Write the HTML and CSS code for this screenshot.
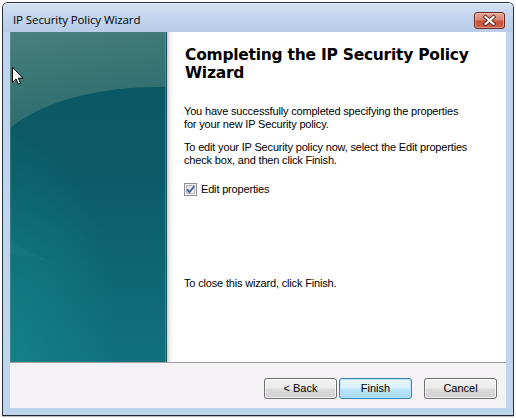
FILE: index.html
```html
<!DOCTYPE html>
<html>
<head>
<meta charset="utf-8">
<title>IP Security Policy Wizard</title>
<link rel="stylesheet" href="styles.css">
</head>
<body>
<div class="window">
  <div class="titlebar">
    <span class="title">IP Security Policy Wizard</span>
    <div class="close">
      <svg width="31" height="17" viewBox="0 0 31 17">
        <path d="M11.5,5 L19.5,12 M19.5,5 L11.5,12" stroke="#5a2a24" stroke-width="4" stroke-linecap="square"/>
        <path d="M11.5,5 L19.5,12 M19.5,5 L11.5,12" stroke="#ffffff" stroke-width="2.2" stroke-linecap="square"/>
      </svg>
    </div>
  </div>
  <div class="client">
    <div class="main">
      <div class="banner">
        <svg width="157" height="330" viewBox="0 0 157 330">
          <defs>
            <linearGradient id="bgGrad" x1="0" y1="0" x2="0" y2="1">
              <stop offset="0" stop-color="#0a5660"/>
              <stop offset="0.45" stop-color="#0b5c68"/>
              <stop offset="1" stop-color="#12707e"/>
            </linearGradient>
            <radialGradient id="glow" cx="0" cy="1" r="0.7" gradientUnits="objectBoundingBox">
              <stop offset="0" stop-color="#13868b" stop-opacity="0.75"/>
              <stop offset="1" stop-color="#13868b" stop-opacity="0"/>
            </radialGradient>
            <linearGradient id="topGrad" x1="0" y1="0" x2="0.3" y2="1">
              <stop offset="0" stop-color="#47807f"/>
              <stop offset="1" stop-color="#2c6b6d"/>
            </linearGradient>
          </defs>
          <rect width="157" height="330" fill="url(#bgGrad)"/>
          <rect width="157" height="330" fill="url(#glow)"/>
          <path d="M0,0 H157 V55 C95,54 38,66 0,96 Z" fill="url(#topGrad)"/>
          <path d="M0,206 C14,218 30,226 50,232 C30,228 14,224 0,222 Z" fill="#ffffff" fill-opacity="0.025"/>
          <rect x="0" y="0" width="1" height="330" fill="#5f9292" fill-opacity="0.5"/>
          <rect x="155" y="0" width="1" height="330" fill="#6fa3a8" fill-opacity="0.6"/>
          <rect x="156" y="0" width="1" height="330" fill="#0b4d55"/>
        </svg>
      </div>
      <div class="content">
        <h1 class="heading">Completing the IP Security Policy Wizard</h1>
        <p class="para first">You have successfully completed specifying the properties<br>for your new IP Security policy.</p>
        <p class="para">To edit your IP Security policy now, select the Edit properties<br>check box, and then click Finish.</p>
        <label class="check">
          <span class="box">
            <svg width="13" height="13" viewBox="0 0 13 13">
              <defs>
                <linearGradient id="cbGrad" x1="0" y1="0" x2="1" y2="1">
                  <stop offset="0" stop-color="#d9dce3"/>
                  <stop offset="1" stop-color="#f8f8f8"/>
                </linearGradient>
              </defs>
              <rect x="0.5" y="0.5" width="12" height="12" fill="#f6f6f6" stroke="#8e8f8f"/>
              <rect x="2.5" y="2.5" width="8" height="8" fill="url(#cbGrad)" stroke="#b5b8bf"/>
              <path d="M3,6.4 L5.4,9.2 L10.2,3.2" fill="none" stroke="#3f5b95" stroke-width="1.8"/>
            </svg>
          </span>
          <span class="check-label">Edit properties</span>
        </label>
        <p class="para closing">To close this wizard, click Finish.</p>
      </div>
    </div>
    <div class="footer">
      <button class="btn">&lt; Back</button>
      <button class="btn default">Finish</button>
      <button class="btn cancel">Cancel</button>
    </div>
  </div>
</div>
<svg class="cursor" width="13" height="19" viewBox="0 0 13 19">
  <path d="M0.5,0.5 V15.5 L4,12 L6.4,17.2 L8.6,16.2 L6.3,11.2 H11 Z" fill="#ffffff" stroke="#000000" stroke-width="1" stroke-linejoin="miter"/>
</svg>
</body>
</html>
```

FILE: styles.css
```css
* {
  box-sizing: border-box;
}

html, body {
  margin: 0;
  padding: 0;
}

body {
  width: 516px;
  height: 418px;
  overflow: hidden;
  position: relative;
  background: #ffffff;
  font-family: "Liberation Sans", Arial, sans-serif;
  color: #000;
}

.window {
  margin: 2px 0 0 2px;
  width: 512px;
  height: 414px;
  border: 1px solid #27313d;
  border-bottom-color: #1d2a33;
  border-radius: 6px 6px 0 0;
  background: #bfd4ee;
  display: flex;
  flex-direction: column;
  box-shadow: 0 1px 0 #b9bcbf;
}

.titlebar {
  height: 29px;
  flex: none;
  display: flex;
  align-items: flex-start;
  padding: 0 8px 0 10px;
  border-radius: 5px 5px 0 0;
  background: linear-gradient(#d3e1f2 0%, #c3d6ee 45%, #b8cde9 100%);
  box-shadow: inset 0 1px 0 #e9f0f9;
}

.title {
  flex: 1;
  font-family: "Open Sans", "Noto Sans", sans-serif;
  font-size: 11.5px;
  letter-spacing: -0.1px;
  line-height: 16px;
  padding-top: 9px;
  color: #000;
}

.close {
  margin-top: 9px;
  width: 31px;
  height: 17px;
  border: 1px solid #6a2a22;
  border-radius: 3px;
  background: linear-gradient(#e4a597 0%, #d98670 45%, #c8533b 55%, #c95f44 100%);
  box-shadow: inset 0 0 0 1px rgba(255, 220, 210, 0.45);
  display: flex;
  align-items: center;
  justify-content: center;
}

.close svg {
  display: block;
  margin: -1px;
}

.client {
  margin: 0 7px 7px;
  height: 376px;
  flex: none;
  display: flex;
  flex-direction: column;
  background: #ffffff;
}

.main {
  height: 330px;
  display: flex;
  flex: none;
}

.banner {
  width: 157px;
  flex: none;
}

.banner svg {
  display: block;
}

.content {
  flex: 1;
  padding: 14px 10px 0 17px;
  background: linear-gradient(to right, #d2d2d2 0px, #e8e8e8 2px, #f6f6f6 4px, #ffffff 7px);
}

.heading {
  margin: 0;
  font-family: "DejaVu Sans", Verdana, sans-serif;
  font-weight: bold;
  font-size: 15.5px;
  letter-spacing: -0.25px;
  line-height: 18px;
  padding-left: 1px;
}

.para {
  margin: 0;
  font-size: 11px;
  letter-spacing: -0.17px;
  line-height: 13px;
}

.para.first {
  margin-top: 23px;
}

.para + .para {
  margin-top: 10px;
}

.check {
  margin-top: 16px;
  display: flex;
  align-items: center;
  height: 13px;
  font-size: 11px;
  letter-spacing: -0.17px;
  line-height: 13px;
}

.box {
  width: 13px;
  height: 13px;
  margin-right: 4px;
}

.box svg {
  display: block;
}

.para.closing {
  margin-top: 81px;
}

.footer {
  height: 46px;
  flex: none;
  border-top: 1px solid #a0a0a0;
  background: #f5f2f5;
  display: flex;
  justify-content: flex-end;
  align-items: flex-start;
  padding: 15px 9px 0 0;
  gap: 2px;
}

.btn {
  width: 73px;
  height: 21px;
  margin: 0;
  padding: 0;
  border: 1px solid #707070;
  border-radius: 3px;
  background: linear-gradient(#f2f2f2 0%, #ebebeb 48%, #dddddd 52%, #cfcfcf 100%);
  box-shadow: inset 0 0 0 1px rgba(255, 255, 255, 0.7);
  font-family: "Liberation Sans", Arial, sans-serif;
  font-size: 11px;
  line-height: 19px;
  color: #000;
  text-align: center;
}

.btn.default {
  border-color: #3c7fb1;
  background: linear-gradient(#eaf6fd 0%, #d9f0fc 48%, #bee6fd 52%, #a7d9f5 100%);
  box-shadow: inset 0 0 0 1px rgba(180, 230, 255, 0.9);
}

.btn.cancel {
  margin-left: 10px;
}

.cursor {
  position: absolute;
  left: 12px;
  top: 67px;
}
```
